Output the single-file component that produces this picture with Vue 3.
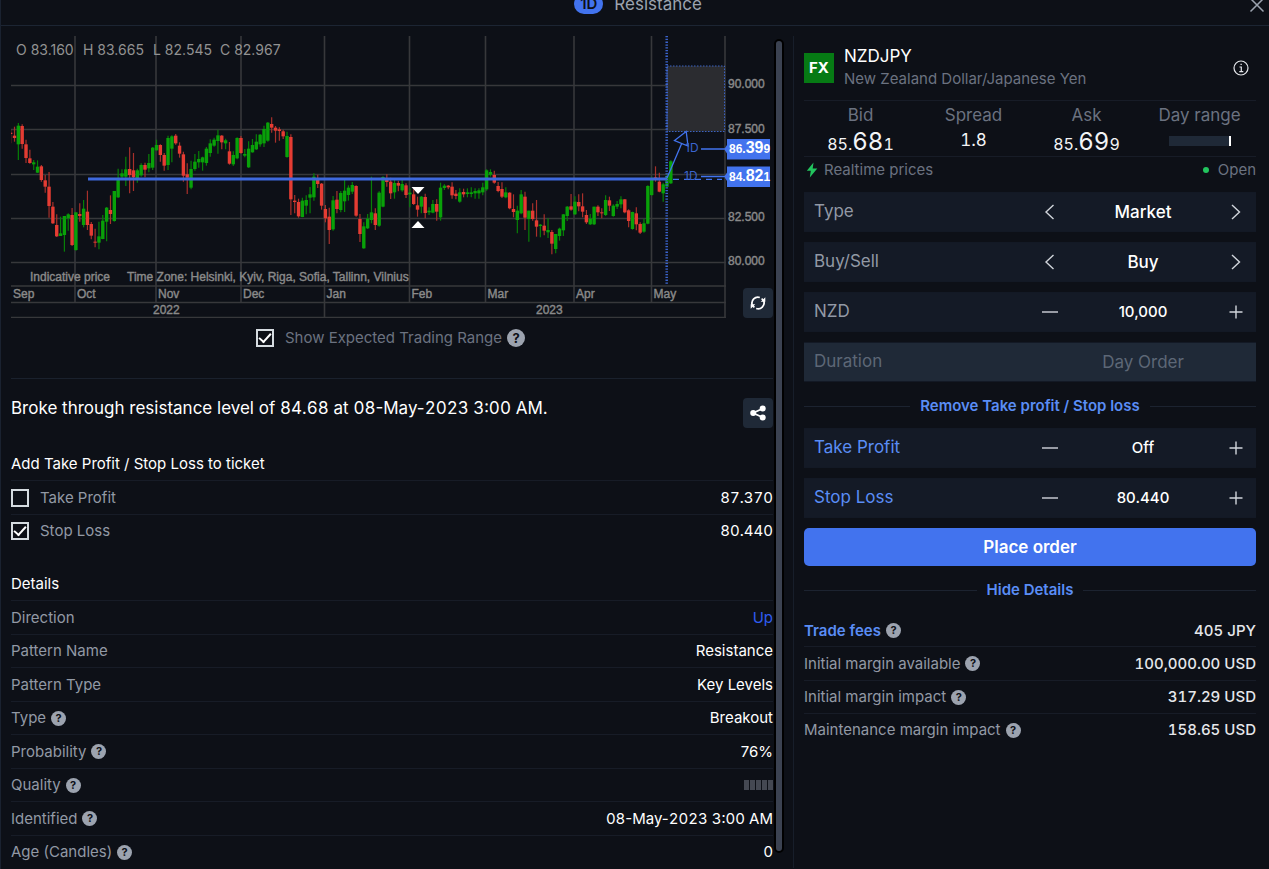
<script setup>
import { ref } from 'vue'

// Each candle: wick top, wick bottom, body top, body bottom, in thirds of a chart unit; 1 = rising.
const series = [
  [388,430,398,402,0],[380,425,407,414,0],[369,480,377,433,1],[373,446,378,432,0],[419,489,433,474,0],
  [449,491,475,489,0],[480,510,487,493,1],[481,519,500,518,1],[495,545,499,540,0],[525,578,541,560,0],
  [516,653,560,618,0],[606,672,620,670,0],[643,711,675,709,0],[650,708,700,708,1],[648,755,648,705,1],
  [640,692,643,655,1],[624,738,645,735,0],[637,752,637,750,1],[610,665,642,648,0],[600,682,626,675,1],
  [572,690,635,675,0],[666,718,672,707,0],[686,742,725,728,0],[665,748,709,728,1],[645,718,662,717,1],
  [621,724,623,665,1],[586,672,630,642,0],[573,665,573,663,1],[506,594,535,592,1],[508,537,520,530,1],
  [470,558,508,530,1],[442,580,507,525,0],[459,573,511,532,0],[506,548,511,535,1],[490,530,495,526,1],
  [488,532,495,509,0],[462,517,489,505,1],[441,510,443,503,1],[419,452,435,451,1],[433,485,435,465,0],
  [459,512,465,497,0],[407,510,414,495,1],[406,487,409,446,1],[402,434,407,430,0],[427,473,437,461,0],
  [455,545,463,527,0],[490,582,523,533,0],[482,568,507,563,1],[462,512,485,507,1],[453,503,477,487,1],
  [470,512,472,487,1],[441,497,446,489,1],[418,470,430,459,1],[413,440,419,437,1],[389,461,406,423,1],
  [405,448,407,427,0],[416,448,421,430,1],[426,494,454,491,0],[454,498,465,493,1],[412,478,414,475,1],
  [408,461,414,459,0],[447,472,462,467,1],[424,504,446,502,1],[417,458,435,457,1],[403,450,425,448,1],
  [402,440,404,433,1],[377,441,387,430,1],[366,425,368,422,1],[352,398,372,383,0],[378,428,383,392,0],
  [382,422,388,393,0],[389,417,394,409,0],[395,473,408,471,1],[403,645,411,598,0],[585,640,602,606,0],
  [596,653,606,649,0],[593,652,602,651,1],[586,643,600,617,1],[561,640,583,593,1],[520,602,530,592,1],
  [524,564,535,552,0],[549,629,551,617,0],[615,667,627,655,0],[623,732,650,690,0],[588,692,601,688,1],
  [573,640,599,627,0],[573,637,579,630,1],[538,636,572,604,1],[556,602,563,585,1],[546,582,555,575,1],
  [556,650,558,647,0],[642,726,657,702,0],[667,746,679,745,1],[642,687,656,685,1],[530,670,637,660,1],
  [625,690,640,675,0],[574,680,578,677,1],[529,622,531,620,1],[523,560,540,546,0],[533,597,545,580,0],
  [540,596,549,577,1],[542,574,549,557,0],[537,575,552,571,1],[550,594,556,585,0],[565,622,578,583,1],
  [568,615,583,612,0],[590,650,616,629,0],[588,640,590,620,1],[581,655,591,639,0],[622,645,632,637,1],
  [600,640,612,638,1],[598,662,612,635,0],[548,662,563,652,1],[553,570,557,564,1],[555,568,557,562,0],
  [547,596,560,586,0],[570,598,581,588,0],[565,608,577,605,1],[566,592,576,583,0],[565,592,577,582,1],
  [562,592,577,582,1],[565,596,573,580,1],[565,596,571,580,1],[548,586,562,577,1],[508,572,511,568,1],
  [508,530,516,524,1],[512,551,525,548,0],[546,577,558,573,0],[547,594,567,590,0],[562,595,577,592,1],
  [577,628,578,625,0],[583,652,627,636,0],[617,700,632,660,1],[570,643,583,640,1],[575,690,590,653,0],
  [632,725,632,657,1],[610,662,632,657,0],[600,710,661,680,0],[672,712,674,678,1],[643,706,677,692,0],
  [655,714,690,697,1],[690,763,696,731,0],[702,760,702,747,1],[683,722,686,708,1],[642,708,643,691,1],
  [618,663,620,648,1],[582,632,619,629,0],[589,645,605,643,1],[583,634,606,619,0],[580,652,619,635,0],
  [630,672,645,667,0],[642,675,656,673,1],[620,675,620,673,1],[616,648,620,637,0],[625,655,637,640,0],
  [586,648,600,645,1],[590,633,601,617,0],[613,650,617,648,1],[603,627,612,620,1],[589,625,598,613,1],
  [597,640,598,637,0],[628,682,631,663,0],[635,689,636,687,1],[622,691,640,673,0],[667,702,672,698,0],
  [656,698,670,695,1],[556,673,558,671,1],[530,588,540,585,1],[499,545,532,540,0],[518,577,545,575,0],
  [548,605,553,580,1],[522,560,528,560,1],[481,552,484,550,1],
]
const candles = series.map(([hi, lo, top, bottom, up], i) => ({
  x: (32 + i * 11.515) / 3,
  hi: hi / 3,
  lo: lo / 3,
  top: top / 3,
  h: Math.max((bottom - top) / 3, 1),
  up,
}))

const priceLines = [85.5, 129.5, 174.5, 218.5, 262.5, 286, 302.5, 317.5]
const priceLabels = [
  { y: 88, t: '90.000' }, { y: 133, t: '87.500' }, { y: 221, t: '82.500' }, { y: 265, t: '80.000' },
]
const months = [
  { x: 11, t: 'Sep' }, { x: 75, t: 'Oct' }, { x: 156, t: 'Nov' }, { x: 241, t: 'Dec' },
  { x: 324.5, t: 'Jan' }, { x: 409.5, t: 'Feb' }, { x: 485.5, t: 'Mar' }, { x: 574, t: 'Apr' }, { x: 651.5, t: 'May' },
]
const tags = [
  { y: 149, a: '86.', b: '39', c: '9' },
  { y: 176.5, a: '84.', b: '82', c: '1' },
]

const showRange = ref(true)
const takeProfit = ref(false)
const stopLoss = ref(true)

const details = [
  { k: 'Direction', v: 'Up', link: true },
  { k: 'Pattern Name', v: 'Resistance' },
  { k: 'Pattern Type', v: 'Key Levels' },
  { k: 'Type', v: 'Breakout', help: true },
  { k: 'Probability', v: '76%', help: true },
  { k: 'Quality', bars: true, help: true },
  { k: 'Identified', date: true, help: true },
  { k: 'Age (Candles)', v: '0', help: true },
]
const choices = [
  { k: 'Type', v: 'Market' },
  { k: 'Buy/Sell', v: 'Buy' },
]
const amount = ref('10,000')
const limits = ref([
  { k: 'Take Profit', v: 'Off' },
  { k: 'Stop Loss', v: '80.440' },
])
const fees = [
  { k: 'Trade fees', v: '405 JPY', strong: true },
  { k: 'Initial margin available', v: '100,000.00 USD' },
  { k: 'Initial margin impact', v: '317.29 USD' },
  { k: 'Maintenance margin impact', v: '158.65 USD' },
]
</script>

<template>
  <div class="dialog">
    <header class="head">
      <span class="pill">1D</span>
      <h1 class="title">Resistance</h1>
      <button class="close" type="button" aria-label="Close">
        <svg viewBox="0 0 16 16" width="16" height="16"><path d="M1.5 1.5 14.5 14.5M14.5 1.5 1.5 14.5" /></svg>
      </button>
    </header>

    <main class="body">
      <section class="left">
        <div class="chart-wrap">
          <svg class="chart" viewBox="11 36 762 282" role="img" aria-label="NZDJPY price chart">
            <g class="grid">
              <path v-for="y in priceLines" :key="'h' + y" :d="`M11 ${y}H726`" />
              <path v-for="m in months.slice(1)" :key="m.t" :d="`M${m.x} 36V${m.t === 'Jan' ? 317 : 302}`" />
              <path d="M725 36V318" />
            </g>
            <g class="axis">
              <text v-for="m in months" :key="m.t" :x="m.x + 2" y="297.5">{{ m.t }}</text>
              <text x="153" y="314">2022</text>
              <text x="536" y="314">2023</text>
              <text v-for="p in priceLabels" :key="p.t" x="728" :y="p.y">{{ p.t }}</text>
              <text x="30" y="281">Indicative price</text>
              <text x="127" y="281">Time Zone: Helsinki, Kyiv, Riga, Sofia, Tallinn, Vilnius</text>
            </g>
            <g class="ohlc">
              <text x="16" y="55">O 83.160</text>
              <text x="83" y="55">H 83.665</text>
              <text x="153" y="55">L 82.545</text>
              <text x="220" y="55">C 82.967</text>
            </g>
            <rect class="zone" x="667" y="66" width="57.5" height="65.5" />
            <g v-for="(c, i) in candles" :key="i" :class="c.up ? 'up' : 'down'">
              <path class="wick" :d="`M${c.x} ${c.hi}V${c.lo}`" />
              <rect :x="c.x - 1.7" :y="c.top" width="3.4" :height="c.h" />
            </g>
            <g class="marks">
              <path d="M411.5 187h13l-6.5 7z" />
              <path d="M411.5 228h13l-6.5-7z" />
            </g>
            <g class="plan">
              <path class="level" d="M88 179H667" />
              <path class="now" d="M666.7 36V285" />
              <path class="dash" d="M673 179.3H722" />
              <path d="M667 178 681.5 144M686.2 131.5 674.5 140.5 688 146z" />
              <path d="M701 149H727M701 176.5H727" />
              <text x="685" y="152">1D</text>
              <text x="684" y="180">1D</text>
            </g>
            <g v-for="t in tags" :key="t.y" class="tag">
              <path :d="`M725 ${t.y - 1}l2-3v-6h43v20.5h-43v-6l-2-3z`" />
              <text x="729" :y="t.y + 4">{{ t.a }}<tspan class="big">{{ t.b }}</tspan>{{ t.c }}</text>
            </g>
          </svg>
          <button class="tool refresh" type="button" aria-label="Refresh chart">
            <svg viewBox="0 0 16 16" width="16" height="16">
              <path class="line" d="M2.2 10A6 6 0 0 1 9.8 2.5M13.8 6A6 6 0 0 1 6.2 13.5M11.6 3.6A6 6 0 0 1 13.4 5.8M4.4 12.4A6 6 0 0 1 2.6 10.2" />
              <path d="M15.3 2.2v4.6h-4.6zM.7 13.8V9.2h4.6z" />
            </svg>
          </button>
        </div>

        <div class="range">
          <label class="check"><input v-model="showRange" type="checkbox"><span>Show Expected Trading Range</span></label>
          <button class="help large" type="button" aria-label="About the expected trading range">?</button>
        </div>

        <div class="summary">
          <p>Broke through resistance level of <span class="value">84.68</span> at <time datetime="2023-05-08T03:00"><span class="value">08</span>-May-<span class="value">2023 3:00</span> AM</time>.</p>
          <button class="tool" type="button" aria-label="Share">
            <svg viewBox="0 0 16 16" width="16" height="16">
              <path class="line" d="M13 3.5 3 8l10 4.5" />
              <circle cx="12.7" cy="3.5" r="3" /><circle cx="3.2" cy="8" r="3" /><circle cx="12.7" cy="12.5" r="3" />
            </svg>
          </button>
        </div>

        <h2 class="sub">Add Take Profit / Stop Loss to ticket</h2>
        <div class="rows ticket">
          <div class="row">
            <label class="check"><input v-model="takeProfit" type="checkbox"><span>Take Profit</span></label>
            <span class="value">87.370</span>
          </div>
          <div class="row">
            <label class="check"><input v-model="stopLoss" type="checkbox"><span>Stop Loss</span></label>
            <span class="value">80.440</span>
          </div>
        </div>

        <h2 class="sub">Details</h2>
        <dl class="rows details">
          <div v-for="d in details" :key="d.k" class="row">
            <dt>{{ d.k }}<button v-if="d.help" class="help" type="button" :aria-label="'About ' + d.k">?</button></dt>
            <dd v-if="d.bars" class="bars"><i v-for="n in 5" :key="n" /></dd>
            <dd v-else-if="d.date"><time datetime="2023-05-08T03:00"><span class="value">08</span>-May-<span class="value">2023 3:00</span> AM</time></dd>
            <dd v-else :class="{ link: d.link }">{{ d.v }}</dd>
          </div>
        </dl>
        <div class="scrollbar" />
      </section>

      <section class="right">
        <div class="instrument">
          <span class="fx">FX</span>
          <div class="names">
            <h2>NZDJPY</h2>
            <p>New Zealand Dollar/Japanese Yen</p>
          </div>
          <button class="info" type="button" aria-label="Instrument information">
            <svg viewBox="0 0 16 16" width="16" height="16"><circle cx="8" cy="8" r="7" /><path d="M6.5 7H8.3V11.5M6.3 11.7h4M7.5 4.3h1.3" /></svg>
          </button>
        </div>

        <div class="quotes">
          <div><h3>Bid</h3><p class="quote">85.<b>68</b>1</p></div>
          <div><h3>Spread</h3><p class="spread">1.8</p></div>
          <div><h3>Ask</h3><p class="quote">85.<b>69</b>9</p></div>
          <div><h3>Day range</h3><div class="day" /></div>
        </div>

        <div class="status">
          <svg viewBox="0 0 12 16" width="12" height="16"><path d="M7.5.5.8 8.8h4L3.8 15.5 11.3 6.5H6.7z" /></svg>
          <span>Realtime prices</span>
          <span class="open">Open</span>
        </div>

        <form class="form" @submit.prevent>
          <div v-for="c in choices" :key="c.k" class="field">
            <span class="name">{{ c.k }}</span>
            <div class="stepper">
              <button type="button" :aria-label="'Previous ' + c.k"><svg viewBox="0 0 18 18" width="18" height="18"><path d="M12.5 2 5 9l7.5 7" /></svg></button>
              <output class="choice">{{ c.v }}</output>
              <button type="button" :aria-label="'Next ' + c.k"><svg viewBox="0 0 18 18" width="18" height="18"><path d="M5 2 12.5 9 5 16" /></svg></button>
            </div>
          </div>
          <div class="field">
            <label class="name" for="amount">NZD</label>
            <div class="stepper">
              <button type="button" aria-label="Less"><svg viewBox="0 0 18 18" width="18" height="18"><path d="M1 9H17" /></svg></button>
              <input id="amount" v-model="amount" type="text">
              <button type="button" aria-label="More"><svg viewBox="0 0 18 18" width="18" height="18"><path d="M2.5 9H15.5M9 2.5V15.5" /></svg></button>
            </div>
          </div>
          <div class="field off">
            <label class="name" for="duration">Duration</label>
            <div class="stepper"><span /><select id="duration" disabled><option>Day Order</option></select><span /></div>
          </div>

          <div class="rule"><button type="button">Remove Take profit / Stop loss</button></div>

          <div v-for="(l, i) in limits" :key="l.k" class="field">
            <label class="name blue" :for="'limit' + i">{{ l.k }}</label>
            <div class="stepper">
              <button type="button" :aria-label="'Lower ' + l.k"><svg viewBox="0 0 18 18" width="18" height="18"><path d="M1 9H17" /></svg></button>
              <input :id="'limit' + i" v-model="l.v" type="text">
              <button type="button" :aria-label="'Raise ' + l.k"><svg viewBox="0 0 18 18" width="18" height="18"><path d="M2.5 9H15.5M9 2.5V15.5" /></svg></button>
            </div>
          </div>
          <button class="submit" type="submit">Place order</button>
          <div class="rule"><button type="button">Hide Details</button></div>
        </form>

        <dl class="rows fees">
          <div v-for="f in fees" :key="f.k" class="row">
            <dt><a v-if="f.strong" href="#">{{ f.k }}</a><template v-else>{{ f.k }}</template><button class="help" type="button" :aria-label="'About ' + f.k">?</button></dt>
            <dd class="value">{{ f.v }}</dd>
          </div>
        </dl>
      </section>
    </main>
  </div>
</template>

<style>
body { background: #0d1017; }
</style>

<style scoped>
* { box-sizing: border-box; }
h1, h2, h3, p, dl, dd, dt { margin: 0; font-weight: 400; }
button, input, select { font: inherit; color: inherit; background: none; border: 0; padding: 0; margin: 0; }
svg { display: block; }

.dialog {
  min-height: 100vh;
  border-left: 1px solid #1a2230;
  background: #0d1017;
  color: #fff;
  font-family: Inter, "Liberation Sans", sans-serif;
  font-size: 15px;
  line-height: 20px;
}
.head {
  position: relative;
  display: flex;
  justify-content: center;
  align-items: center;
  gap: 11px;
  height: 26px;
  padding: 0 0 17px 6px;
  border-bottom: 1px solid #1c2533;
}
.pill { padding: 0 6px; border-radius: 10px; background: #4273ee; color: #0d1017; font-size: 15px; font-weight: 600; }
.title { font-size: 17px; color: #9ca3af; }
.close { position: absolute; right: 4px; top: -3px; }
.close path { stroke: #9ca3af; stroke-width: 1.5; }

.body { display: grid; grid-template-columns: minmax(0, 1fr) 476px; }
.left { position: relative; padding: 10px 20px 0 10px; }
.right { margin-top: 10px; padding: 0 13px 0 10px; border-left: 1px solid #171e2a; }

.chart-wrap { position: relative; }
.chart { width: 100%; height: auto; }
.grid path { stroke: #37383b; stroke-width: 1.6; }
.axis { font: 12px "Liberation Sans", sans-serif; }
.axis text { fill: #8a8a8a; stroke: #8a8a8a; stroke-width: .4; }
.ohlc { font-size: 14px; fill: #929292; }
.zone { fill: #2b2c30; stroke: #3b62c4; stroke-dasharray: 1.5 1.5; }
.up { fill: #09a109; stroke: #078007; }
.down { fill: #e53c33; stroke: #a8302b; }
.up rect, .down rect { stroke: none; }
.wick { stroke-width: 1.2; }
.marks { fill: #fff; }
.plan path { fill: none; stroke: #4273ee; stroke-width: 1.3; }
.plan .level { stroke: #3e69dc; stroke-width: 3; }
.plan .now { stroke-width: 2.5; stroke-dasharray: 1.3 1.5; stroke: #3c65cf; }
.plan .dash { stroke-dasharray: 6 5; }
.plan text { fill: #3a64ce; font-size: 12px; }
.tag path { fill: #4273ee; }
.tag text { fill: #fff; font: bold 12px "Liberation Sans", sans-serif; }
.tag .big { font-size: 16px; }

.tool { display: grid; place-items: center; width: 30px; height: 30px; border-radius: 4px; background: #1f2937; fill: #fff; }
.tool .line { fill: none; stroke: #fff; stroke-width: 1.8; }
.refresh { position: absolute; right: 0; bottom: 0; }

.range { display: flex; justify-content: center; align-items: center; gap: 5px; height: 61px; padding: 0 3px 21px 0; border-bottom: 1px solid #1a212d; color: #6b7280; }
.check { display: flex; align-items: center; gap: 11px; }
.check input { appearance: none; width: 18px; height: 18px; border: 2px solid #d5dbe0; display: grid; place-items: center; }
.check input:checked::before { content: ""; width: 10px; height: 5px; margin-bottom: 3px; border: solid #fff; border-width: 0 0 2px 2px; rotate: -48deg; }
.help { flex: none; width: 15px; height: 15px; border-radius: 50%; background: #9ca3af; color: #0d1017; font-size: 11px; line-height: 15px; font-weight: 700; text-align: center; }
.help.large { width: 18px; height: 18px; font-size: 13px; line-height: 18px; }

.summary { display: flex; justify-content: space-between; align-items: flex-start; height: 69px; padding-top: 19px; font-size: 17px; }
.sub { height: 32px; line-height: 32px; font-size: 15px; }
.rows { display: grid; grid-auto-rows: 1fr; }
.row { display: flex; justify-content: space-between; align-items: center; padding-top: 1px; border-top: 1px solid #171c27; }
.row dt, .row .check { color: #9299a5; }
.row dt { display: flex; align-items: center; gap: 5px; }
.value { font-variant-numeric: tabular-nums; }
.ticket { height: 67px; margin-bottom: 21px; }
.details { height: 268px; }
.link { color: #2f5cf0; }
.bars { display: flex; gap: 1px; }
.bars i { width: 5px; height: 10px; background: #444852; }
.scrollbar { position: absolute; right: 9px; top: 13px; bottom: 15px; width: 10px; border: 2px solid #000; border-radius: 5px; background: #3b4251; }

.instrument { display: flex; align-items: center; gap: 10px; height: 65px; border-bottom: 1px solid #171c27; }
.fx { width: 30px; height: 30px; background: #067a14; font-weight: 700; line-height: 30px; text-align: center; }
.names { flex: 1; color: #6b7280; line-height: 22px; padding-bottom: 2px; }
.names h2 { color: #fff; font-size: 17px; line-height: 24px; }
.info { margin-right: 7px; }
.info circle, .info path { fill: none; stroke: #e5e7eb; stroke-width: 1.2; }
.quotes { display: grid; grid-template-columns: repeat(4, 1fr); height: 56px; padding-top: 4px; border-bottom: 1px solid #171c27; text-align: center; }
.quotes h3 { color: #6b7280; font-size: 17px; }
.quote, .spread { font-size: 17px; line-height: 30px; color: #f3f4f6; font-variant-numeric: tabular-nums; }
.quote { font-size: 16px; line-height: 33px; }
.quote b { font-size: 24px; font-weight: 400; }
.day { width: 62px; height: 10px; margin: 11px auto 0; background: #1f2937; border-right: 2px solid #fff; }
.status { display: flex; align-items: center; gap: 6px; height: 35px; padding: 0 0 9px 2px; color: #6b7280; }
.status svg { fill: #22c55e; }
.open { margin-left: auto; display: flex; align-items: center; gap: 9px; }
.open::before { content: ""; width: 6px; height: 6px; border-radius: 50%; background: #22c55e; }

.form { display: flex; flex-direction: column; gap: 10px; }
.field { display: flex; align-items: center; height: 40px; background: #141a26; border: 1px solid #131925; border-width: 1px 0; }
.name { flex: 1; padding: 0 0 3px 10px; color: #9299a5; font-size: 17px; }
.blue { color: #5a8df5; }
.stepper { flex: none; width: 50%; display: grid; grid-template-columns: 40px minmax(0, 1fr) 40px; align-items: center; justify-items: center; }
.stepper path { fill: none; stroke: #d1d5db; stroke-width: 1.4; }
.stepper input, .stepper select, .choice { width: 100%; text-align: center; font-weight: 500; }
.choice { font-size: 17px; }
.off { background: #1f2937; }
.off .name, .stepper select { color: #5d6776; opacity: 1; }
.stepper select { appearance: none; text-align-last: center; font-size: 17px; font-weight: 400; }
.rule { display: flex; align-items: center; gap: 10px; height: 26px; padding-top: 2px; color: #5a8df5; font-weight: 600; }
.rule::before, .rule::after { content: ""; flex: 1; border-top: 1px solid #1c2330; }
.submit { height: 38px; border-radius: 5px; background: #4273ee; font-size: 17px; font-weight: 600; }
.fees { height: 133px; margin-top: 11px; }
.fees .row:first-child { border-top-color: transparent; }
.fees a { color: #5a8df5; font-weight: 600; text-decoration: none; }
.fees .value { font-weight: 500; color: #e5e7eb; }
</style>
